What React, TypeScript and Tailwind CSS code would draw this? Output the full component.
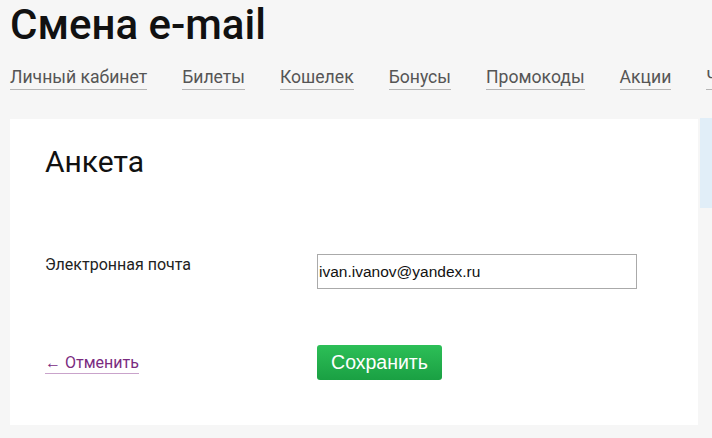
import React from "react";

const navItems = ["Личный кабинет", "Билеты", "Кошелек", "Бонусы", "Промокоды", "Акции", "Частые вопросы"];

export default function App() {
  return (
    <div className="w-[712px] h-[438px] overflow-hidden bg-[#f6f6f6] pl-[10px]" style={{ fontFamily: "Roboto, 'Noto Sans', sans-serif" }}>
      <h1 className="text-[42px] leading-[42px] font-medium text-[#111] pt-[4px] whitespace-nowrap">Смена e-mail</h1>
      <nav className="flex gap-[35px] mt-[20px] whitespace-nowrap">
        {navItems.map((t) => (
          <span key={t} className="text-[17.6px] leading-[22px] text-[#555] border-b border-[#b5b5b5] pb-[1px]">{t}</span>
        ))}
      </nav>
      <div className="flex mt-[29px] gap-[2px]">
        <div className="w-[688px] h-[306px] shrink-0 bg-white pl-[35px] pt-[25px]">
          <h2 className="text-[30px] leading-[36px] text-[#111] font-normal">Анкета</h2>
          <div className="flex items-start mt-[74px]">
            <div className="w-[272px] text-[16px] leading-[20px] text-[#222] pt-[1px]">Электронная почта</div>
            <input
              readOnly
              value="ivan.ivanov@yandex.ru"
              className="w-[320px] h-[35px] border border-[#aaa] px-[1px] text-[15.5px] text-[#111] outline-none"
              style={{ fontFamily: "'Liberation Sans', Arial, sans-serif" }}
            />
          </div>
          <div className="flex items-center mt-[56px]">
            <div className="w-[272px]">
              <a className="text-[16px] leading-[18px] text-[#7a2b7f] border-b border-[#c9a3cb] pb-[1px]">← Отменить</a>
            </div>
            <button
              className="w-[125px] h-[35px] rounded-[3px] bg-gradient-to-b from-[#2cbf57] to-[#1aa043] text-white text-[19.5px]"
              style={{ fontFamily: "'Liberation Sans', Arial, sans-serif" }}
            >
              Сохранить
            </button>
          </div>
        </div>
        <div className="w-[20px] h-[90px] shrink-0 bg-[#e1eef8] -mt-[1px]"></div>
      </div>
    </div>
  );
}
